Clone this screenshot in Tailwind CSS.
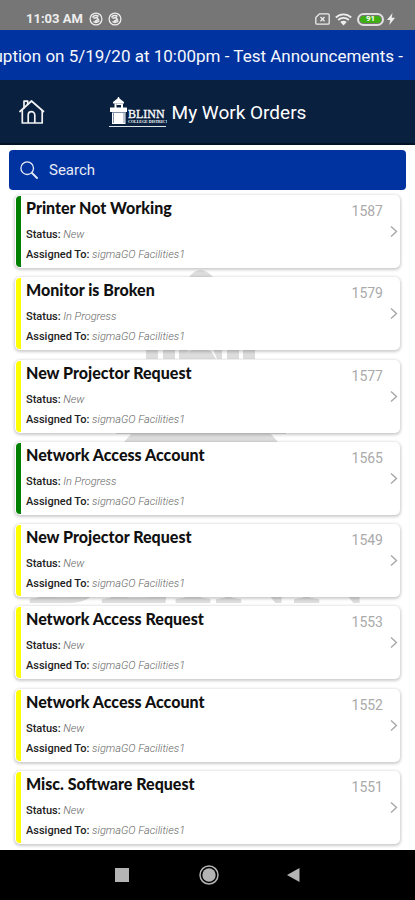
<!DOCTYPE html>
<html lang="en">
<head>
<meta charset="utf-8">
<meta name="viewport" content="width=device-width, initial-scale=1">
<title>My Work Orders</title>
<script src="https://cdn.jsdelivr.net/npm/@tailwindcss/browser@4"></script>
</head>
<body class="flex min-h-screen flex-col bg-white font-['Roboto',sans-serif]">

<!-- Status bar -->
<div class="flex h-[30px] items-center bg-[#767676] pt-2 pr-[20px] pl-[26px] text-[#ededed]">
  <span class="text-[13px] leading-4 font-bold">11:03 AM</span>
  <svg class="ml-[6px] size-[14px]" viewBox="0 0 14 14" fill="none" stroke="currentColor" aria-hidden="true"><circle cx="7" cy="7" r="5.9" stroke-width="1.3"/><path d="M3.500 5.500C4.500 3 8 2.800 9.500 4.500M4.500 6.200 8 5.500 9.300 7.500 6 9.500M10.300 8.500c-1 2-4 2.600-5.800 1" stroke-width="1.500"/></svg>
  <svg class="ml-[5px] size-[14px]" viewBox="0 0 14 14" fill="none" stroke="currentColor" aria-hidden="true"><circle cx="7" cy="7" r="5.9" stroke-width="1.3"/><path d="M3.500 5.500C4.500 3 8 2.800 9.500 4.500M4.500 6.200 8 5.500 9.300 7.500 6 9.500M10.300 8.500c-1 2-4 2.600-5.800 1" stroke-width="1.500"/></svg>
  <svg class="ml-auto h-[12px] w-[15px]" viewBox="0 0 15 12" fill="none" stroke="currentColor" stroke-width="1.300" aria-hidden="true"><path d="M4.500.8H13a1.200 1.200 0 0 1 1.200 1.200v8A1.200 1.200 0 0 1 13 11.200H2A1.200 1.200 0 0 1 .8 10V4.500z"/><path d="m5.500 4 4 4.300m0-4.300-4 4.300"/></svg>
  <svg class="ml-[5px] h-[13px] w-[17px]" viewBox="0 0 17 13" fill="none" stroke="currentColor" aria-hidden="true"><path d="M.8 4.500c4.400-4.200 11-4.200 15.400 0M3.200 7c3-2.800 7.600-2.800 10.600 0" stroke-width="1.800"/><path d="M5.300 8.900c1.900-1.500 4.500-1.500 6.400 0L8.500 12.500z" fill="currentColor" stroke="none"/></svg>
  <span class="ml-[5px] flex h-[13px] w-[27px] rounded-full border-2 border-[#e0e0e0] p-px"><span class="flex flex-1 items-center justify-center rounded-full bg-[#3fae12] text-[8px] leading-none font-bold text-white">91</span></span>
  <svg class="ml-[3px] h-[12px] w-[8px]" viewBox="0 0 8 12" fill="currentColor" aria-hidden="true"><path d="M5.500 0 0 7h3.200L2.300 12 8 4.800H4.700z"/></svg>
</div>

<!-- Scrolling announcement -->
<div class="flex h-[50px] items-center justify-end overflow-hidden bg-[#0033a0] pt-[2px] pr-[12px] text-[17px] leading-6 whitespace-nowrap text-[#f6f8fc]">
  <p>uption on 5/19/20 at 10:00pm - Test Announcements -</p>
</div>

<!-- Title bar -->
<header class="relative flex h-[65px] items-center justify-center border-b-2 border-[#041226] bg-[#0a203f] pt-[2px] text-white">
  <a href="#" aria-label="Home" class="absolute top-[19px] left-[19px]">
    <svg class="h-[26px] w-[26px]" viewBox="0 0 26 26" fill="none" stroke="#f2f2f2" stroke-width="1.700" stroke-linejoin="round" stroke-linecap="round"><path d="M1 12.500 12.500 2 24.500 12.500"/><path d="M3.300 10.700V24h5.900v-7.800c0-4.800 6.600-4.800 6.600 0V24h7.400V11.500M9.200 24h6.600"/><path d="M5 8.800V2.200h3.700v3"/></svg>
  </a>
  <svg class="h-[32px] w-[58px]" viewBox="0 0 58 32" aria-label="Blinn College District" role="img">
    <g fill="#fff"><path d="M9 0h1l.5 1.500L15 5v1.500H4V5l4.500-3.500z"/><path d="M5.500 6.500h2V11h-2zm6.500 0h2V11h-2z"/><path d="M7.500 6.500h4.500V8H7.500z"/><path d="M1 10.500h17V15h-1.500v12H3V15H1z"/></g>
    <path d="M4.500 16v10m10.500-10v10M3 15.500h13.500" stroke="#8392a8" stroke-width="1"/>
    <path d="M0 29.500h57" stroke="#dfe4eb" stroke-width="1"/>
    <text x="19" y="21" font-family="Liberation Serif, serif" font-size="12" fill="#fff" stroke="#fff" stroke-width=".3">BLINN</text>
    <text x="19" y="26" font-family="Liberation Serif, serif" font-size="4" font-weight="bold" fill="#fff">COLLEGE DISTRICT</text>
  </svg>
  <h1 class="ml-[5px] text-[19px] leading-6">My Work Orders</h1>
</header>

<main class="relative flex flex-1 flex-col px-[9px] pt-[5px] pb-[6px]">
  <!-- Watermark behind the cards -->
  <svg class="absolute top-[124px] left-1/2 h-[340px] w-[360px] -translate-x-1/2" viewBox="0 0 360 340" fill="#dddddd" aria-hidden="true">
    <path d="M161 8q11-14 24 0z"/>
    <path d="M118 80h12v10h-12zm17 0h12v10h-12zm16 0h10l-4 10h-6zm34 0h9l0 10h-5zm14 0h12v10h-12zm16 0h12v10h-12zM161 82q12-5 22 0l5 8h-32z"/>
    <path d="M88 160h170v5H88zM104 164h138l8 9H96z"/>
    <text x="0" y="334" font-family="Liberation Serif, serif" font-size="108" font-weight="bold">BLINN</text>
  </svg>

  <label class="relative mb-[5px] flex h-[40px] shrink-0 items-center gap-[11px] rounded-[4px] bg-[#0033a0] pl-[11px] text-white">
    <svg class="size-[18px]" viewBox="0 0 18 18" fill="none" stroke="#e6ebf5" stroke-width="1.300" stroke-linecap="round" aria-hidden="true"><circle cx="7.200" cy="7.200" r="6.300"/><path d="m12 12 5 5" stroke-width="1.800"/></svg>
    <input type="search" placeholder="Search" aria-label="Search" class="min-w-0 flex-1 bg-transparent text-[15px] leading-5 outline-none placeholder:text-[#e6ebf5]">
  </label>

  <ul id="orders" class="relative flex flex-1 flex-col justify-between px-[6px]"></ul>
</main>

<!-- System navigation -->
<nav class="flex h-[50px] items-center justify-center gap-[68px] bg-black" aria-label="System">
  <button aria-label="Recent apps"><svg class="size-[18px]" viewBox="0 0 18 18"><path d="M2 2h14v14H2z" fill="#b4b4b4"/></svg></button>
  <button aria-label="Home screen"><svg class="size-[20px]" viewBox="0 0 20 20"><circle cx="10" cy="10" r="9" fill="none" stroke="#b4b4b4" stroke-width="1.500"/><circle cx="10" cy="10" r="6.700" fill="#b4b4b4"/></svg></button>
  <button aria-label="Back"><svg class="size-[16px]" viewBox="0 0 16 16"><path d="M0 8 12.500 1v14z" fill="#b4b4b4"/></svg></button>
</nav>

<script>
const orders = [
  ["Printer Not Working", "New", 1587, "bg-[#008000]"],
  ["Monitor is Broken", "In Progress", 1579, "bg-[#ffff00]"],
  ["New Projector Request", "New", 1577, "bg-[#ffff00]"],
  ["Network Access Account", "In Progress", 1565, "bg-[#008000]"],
  ["New Projector Request", "New", 1549, "bg-[#ffff00]"],
  ["Network Access Request", "New", 1553, "bg-[#ffff00]"],
  ["Network Access Account", "New", 1552, "bg-[#ffff00]"],
  ["Misc. Software Request", "New", 1551, "bg-[#ffff00]"],
];
document.getElementById("orders").innerHTML = orders.map(([title, status, id, bar]) => `
  <li>
    <a href="#" class="flex h-[73px] overflow-hidden rounded-[5px] bg-white shadow-[0_1px_3px_1px_rgba(0,0,0,0.2)]">
      <span class="my-px ml-px w-[5px] rounded-l-[4px] ${bar}"></span>
      <span class="flex flex-1 flex-col pl-[5px]">
        <span class="mt-[3px] font-['Lato',sans-serif] text-[16px] leading-5 font-black text-[#111]">${title}</span>
        <span class="mt-[7px] text-[11px] leading-5 font-light text-[#666] italic"><b class="font-medium text-[#222] not-italic">Status:</b> ${status}</span>
        <span class="text-[11px] leading-5 font-light text-[#666] italic"><b class="font-medium text-[#222] not-italic">Assigned To:</b> sigmaGO Facilities1</span>
      </span>
      <span class="flex flex-col items-end pr-[2px]">
        <span class="mt-[6px] mr-[15px] text-[14px] leading-5 text-[#aaa]">${id}</span>
        <svg class="mt-[4px] h-[13px] w-[8px]" viewBox="0 0 8 13" fill="none" stroke="#a5a5a5" stroke-width="1.300" aria-hidden="true"><path d="m1 1.500 5.500 5L1 11.500"/></svg>
      </span>
    </a>
  </li>`).join("");
</script>
</body>
</html>
